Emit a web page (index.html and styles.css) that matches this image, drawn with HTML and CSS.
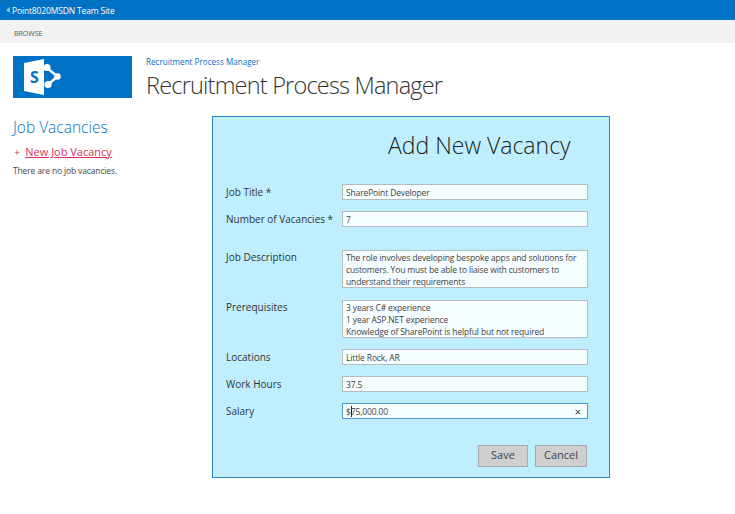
FILE: index.html
```html
<!DOCTYPE html>
<html lang="en">
<head>
  <meta charset="UTF-8" />
  <title>Recruitment Process Manager</title>
  <link rel="stylesheet" href="styles.css">
</head>
<body>
  <div class="topbar"><span class="back-arrow"></span>Point8020MSDN Team Site</div>
  <div class="ribbon">BROWSE</div>

  <header class="site-head">
    <div class="logo">
      <svg width="38" height="36" viewBox="0 0 38 36">
        <path d="M0 4 L20 0 V36 L0 32 Z" fill="#fff"/>
        <path d="M22.500 8.500 L33.500 17.500 L24 25.500" fill="none" stroke="#fff" stroke-width="2.500"/>
        <circle cx="23" cy="8.500" r="3.600" fill="#fff"/>
        <circle cx="33.500" cy="17.500" r="3.200" fill="#fff"/>
        <circle cx="24" cy="25.500" r="3.600" fill="#fff"/>
      </svg>
      <span class="logo-s">S</span>
    </div>
    <div class="titles">
      <a class="crumb">Recruitment Process Manager</a>
      <h1>Recruitment Process Manager</h1>
    </div>
  </header>

  <main class="content">
    <nav class="side">
      <h2>Job Vacancies</h2>
      <div class="new-item"><span class="plus">+</span><a>New Job Vacancy</a></div>
      <p>There are no job vacancies.</p>
    </nav>

    <section class="panel">
      <h3>Add New Vacancy</h3>
      <div class="row row-title">
        <label>Job Title *</label>
        <div class="field">SharePoint Developer</div>
      </div>
      <div class="row row-count">
        <label>Number of Vacancies *</label>
        <div class="field">7</div>
      </div>
      <div class="row row-desc">
        <label>Job Description</label>
        <div class="field multi">The role involves developing bespoke apps and solutions for customers. You must be able to liaise with customers to understand their requirements</div>
      </div>
      <div class="row row-pre">
        <label>Prerequisites</label>
        <div class="field multi">3 years C# experience<br>1 year ASP.NET experience<br>Knowledge of SharePoint is helpful but not required</div>
      </div>
      <div class="row">
        <label>Locations</label>
        <div class="field">Little Rock, AR</div>
      </div>
      <div class="row">
        <label>Work Hours</label>
        <div class="field">37.5</div>
      </div>
      <div class="row">
        <label>Salary</label>
        <div class="field focused"><span>$<i class="caret"></i>75,000.00</span><b class="clear">×</b></div>
      </div>
      <div class="buttons">
        <button class="btn-save">Save</button>
        <button class="btn-cancel">Cancel</button>
      </div>
    </section>
  </main>
</body>
</html>
```

FILE: styles.css
```css
html, body {
  margin: 0;
  font-family: 'Open Sans', 'Noto Sans', sans-serif;
  color: #444;
  background-color: #fff;
}
.topbar {
  height: 20px;
  padding-left: 6px;
  background-color: #0072c6;
  color: #fff;
  font-size: 8.500px;
  letter-spacing: -0.15px;
  display: flex;
  align-items: center;
}
.back-arrow {
  width: 0;
  height: 0;
  margin-right: 2px;
  border-top: 3px solid transparent;
  border-bottom: 3px solid transparent;
  border-right: 4px solid #8fc0e6;
}
.ribbon {
  height: 23px;
  line-height: 27px;
  padding-left: 14px;
  background-color: #f2f2f2;
  color: #555;
  font-size: 7px;
}
.site-head {
  display: flex;
  margin: 13px 0 0 13px;
}
.logo {
  position: relative;
  width: 119px;
  height: 42px;
  background-color: #0072c6;
}
.logo svg {
  position: absolute;
  left: 11px;
  top: 3px;
}
.logo-s {
  position: absolute;
  left: 17px;
  top: 10px;
  color: #0072c6;
  font-size: 16px;
  line-height: 22px;
  font-weight: 700;
}
.titles {
  margin-left: 14px;
}
.crumb {
  display: block;
  font-size: 8.100px;
  line-height: 12px;
  color: #0072c6;
}
h1 {
  margin: 1px 0 0;
  font-size: 23.500px;
  letter-spacing: -0.8px;
  line-height: 33px;
  font-weight: 300;
  color: #333;
}
.content {
  display: flex;
  margin-top: 14px;
}
.side {
  width: 212px;
  padding-left: 13px;
  box-sizing: border-box;
}
.side h2 {
  margin: 0;
  font-size: 15.500px;
  line-height: 22px;
  font-weight: 300;
  color: #0072c6;
}
.new-item {
  margin-top: 6px;
  font-size: 11px;
  line-height: 16px;
  color: #d8325a;
}
.plus {
  margin: 0 5px 0 1px;
}
.new-item a {
  text-decoration: underline;
}
.side p {
  margin: 4px 0 0;
  font-size: 8.500px;
  letter-spacing: -0.14px;
  line-height: 13px;
  color: #444;
}
.panel {
  width: 398px;
  height: 362px;
  box-sizing: border-box;
  padding: 0 21px 0 13px;
  background-color: #bfefff;
  border: 1px solid #2b88c8;
}
.panel h3 {
  margin: 12px 0 23px;
  padding-left: 162px;
  font-size: 23px;
  line-height: 32px;
  font-weight: 300;
  color: #222;
}
.row {
  display: flex;
  margin-bottom: 11px;
}
.row-count {
  margin-bottom: 23px;
}
.row-desc {
  margin-bottom: 12px;
}
.row label {
  width: 116px;
  flex: none;
  padding-top: 1px;
  font-size: 10px;
  line-height: 15px;
  color: #333;
}
.row-desc label, .row-pre label {
  padding-top: 0;
}
.field {
  width: 246px;
  box-sizing: border-box;
  height: 16px;
  padding: 1px 3px 0;
  display: flex;
  align-items: center;
  justify-content: space-between;
  background-color: #f5fdff;
  border: 1px solid #b4bcc0;
  font-size: 8.500px;
  letter-spacing: -0.14px;
  line-height: 12px;
  color: #444;
}
.field.multi {
  display: block;
  height: 38px;
}
.field.focused {
  border-color: #4a9ad4;
}
.caret {
  display: inline-block;
  width: 1px;
  height: 11px;
  margin-right: -1px;
  vertical-align: -2px;
  background-color: #222;
}
.clear {
  margin-right: 3px;
  font-size: 11px;
  font-weight: 400;
  color: #333;
}
.buttons {
  display: flex;
  justify-content: flex-end;
  gap: 7px;
  margin-top: 26px;
  padding-right: 1px;
}
.buttons button {
  height: 22px;
  padding: 0 0 3px;
  font-family: inherit;
  font-size: 11px;
  color: #444;
  background-color: #cfcfcf;
  border: 1px solid #a9a9a9;
}
.btn-save {
  width: 50px;
}
.btn-cancel {
  width: 52px;
}
```
